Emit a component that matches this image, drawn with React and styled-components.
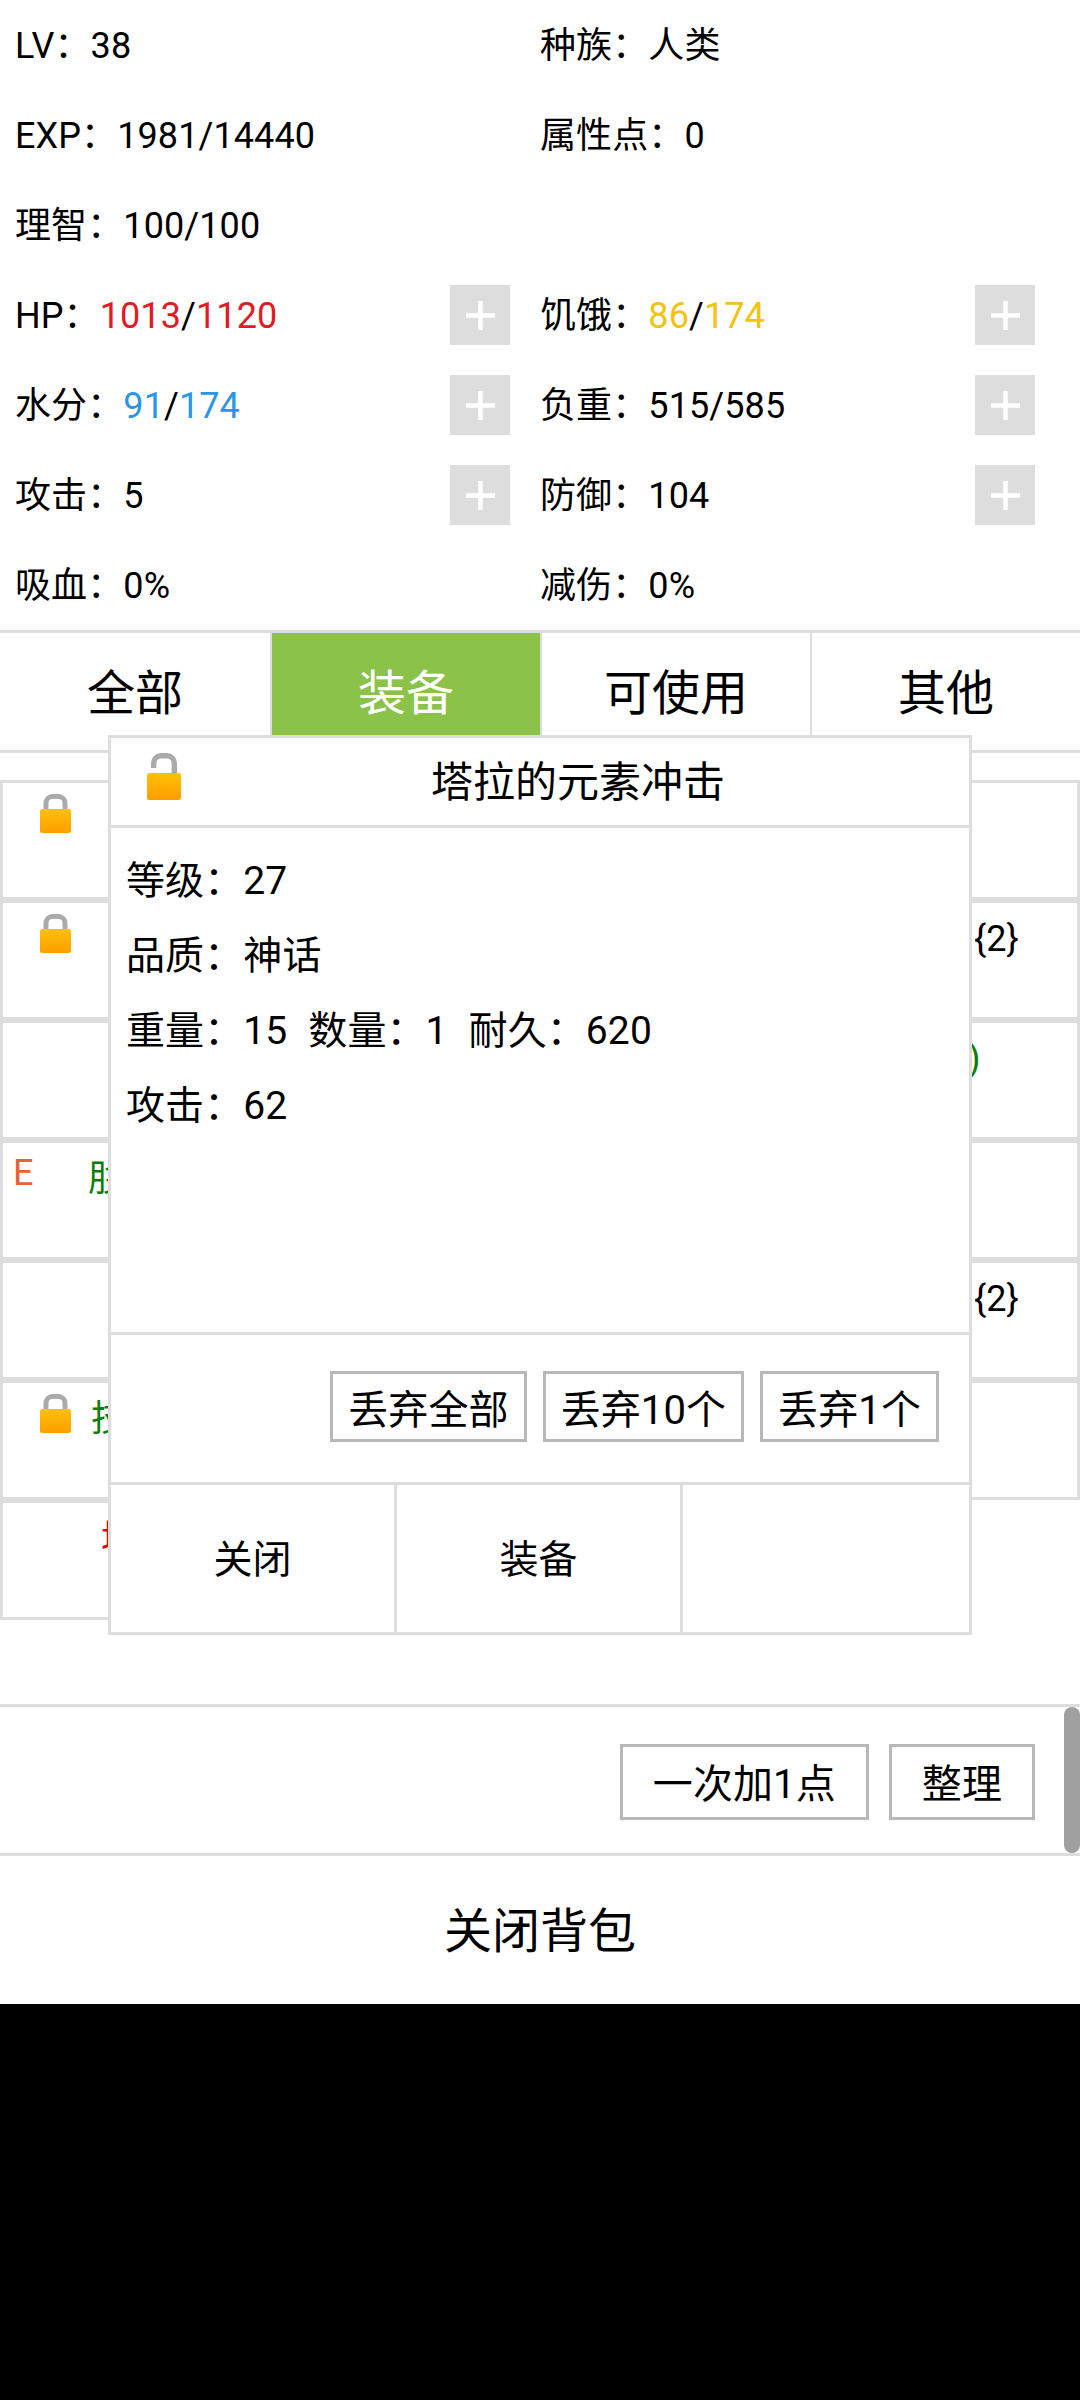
import styled, { createGlobalStyle } from "styled-components";

const line = "#dddddd";
const outline = "#b8b8b8";

const stats = [
    { label: "LV", value: "38" },
    { label: "种族", value: "人类" },
    { label: "EXP", value: "1981/14440" },
    { label: "属性点", value: "0" },
    { label: "理智", value: "100/100" },
    null,
    { label: "HP", cur: "1013", max: "1120", tone: "#e01b24", plus: true },
    { label: "饥饿", cur: "86", max: "174", tone: "#f5c211", plus: true },
    { label: "水分", cur: "91", max: "174", tone: "#2a96e8", plus: true },
    { label: "负重", value: "515/585", plus: true },
    { label: "攻击", value: "5", plus: true },
    { label: "防御", value: "104", plus: true },
    { label: "吸血", value: "0%" },
    { label: "减伤", value: "0%" },
];

const tabs = ["全部", "装备", "可使用", "其他"];

// only what shows around the popup is filled in, the rest sits behind it
const items = [
    { locked: true },
    {},
    { locked: true },
    { name: "{2}", inset: 431 },
    {},
    { name: ")", inset: 425, color: "#0a7d0a" },
    { tag: "E", name: "肜", inset: 85, color: "#0a7d0a" },
    {},
    {},
    { name: "{2}", inset: 431 },
    { locked: true, name: "技", inset: 88, color: "#0a7d0a" },
    {},
    { name: "塔", inset: 98, color: "#e00000" },
];

function ClosedLock() {
    return (
        <ItemLock width="31" height="39" viewBox="0 0 31 39">
            <defs>
                <linearGradient id="lockBody" x1="0" y1="0" x2="0" y2="1">
                    <stop offset="0" stopColor="#ffc107" />
                    <stop offset="1" stopColor="#ff9d00" />
                </linearGradient>
            </defs>
            <path d="M6 16V9A6.5 6.5 0 0 1 12.5 2.5H18.5A6.5 6.5 0 0 1 25 9V16" fill="none" stroke="#aaaaaa" strokeWidth="5" />
            <rect y="15" width="31" height="24" rx="2.5" fill="url(#lockBody)" />
        </ItemLock>
    );
}

function OpenLock() {
    return (
        <svg width="34" height="47" viewBox="0 0 34 47">
            <defs>
                <linearGradient id="openBody" x1="0" y1="0" x2="0" y2="1">
                    <stop offset="0" stopColor="#ffc107" />
                    <stop offset="1" stopColor="#ff9d00" />
                </linearGradient>
            </defs>
            <path d="M6.7 15V10A7.3 7.3 0 0 1 14 2.7H20A7.3 7.3 0 0 1 27.3 10V22" fill="none" stroke="#aaaaaa" strokeWidth="5.4" />
            <rect y="20" width="34" height="27" rx="2.5" fill="url(#openBody)" />
        </svg>
    );
}

function Stat({ stat }) {
    if (!stat) return <StatRow />;
    return (
        <StatRow>
            <StatText>
                {stat.label}：
                {stat.value ? (
                    stat.value
                ) : (
                    <>
                        <Tone $color={stat.tone}>{stat.cur}</Tone>/<Tone $color={stat.tone}>{stat.max}</Tone>
                    </>
                )}
            </StatText>
            {stat.plus && (
                <PlusButton>
                    <svg width="29" height="29" viewBox="0 0 29 29">
                        <path d="M14.5 0V29M0 14.5H29" stroke="#ffffff" strokeWidth="4.5" />
                    </svg>
                </PlusButton>
            )}
        </StatRow>
    );
}

export default function App() {
    return (
        <Page>
            <GlobalStyle />
            <StatsGrid>
                {stats.map((stat, i) => (
                    <Stat key={i} stat={stat} />
                ))}
            </StatsGrid>

            <TabBar>
                {tabs.map((tab) => (
                    <Tab key={tab} $active={tab === "装备"}>
                        {tab}
                    </Tab>
                ))}
            </TabBar>

            <ItemList>
                {items.map((item, i) => (
                    <ItemCell key={i}>
                        {item.locked && <ClosedLock />}
                        {item.tag && <ItemTag>{item.tag}</ItemTag>}
                        {item.name && (
                            <ItemName $inset={item.inset} $color={item.color}>
                                {item.name}
                            </ItemName>
                        )}
                    </ItemCell>
                ))}
            </ItemList>

            <ToolBar>
                <OutlineButton>一次加1点</OutlineButton>
                <OutlineButton>整理</OutlineButton>
                <ScrollThumb />
            </ToolBar>

            <CloseBag>关闭背包</CloseBag>

            <Popup>
                <PopupHeader>
                    <OpenLock />
                    <PopupTitle>塔拉的元素冲击</PopupTitle>
                </PopupHeader>
                <PopupBody>
                    <div>等级：27</div>
                    <div>品质：神话</div>
                    <div>重量：15&nbsp;&nbsp;数量：1&nbsp;&nbsp;耐久：620</div>
                    <div>攻击：62</div>
                </PopupBody>
                <PopupActions>
                    <DropButton>丢弃全部</DropButton>
                    <DropButton>丢弃10个</DropButton>
                    <DropButton>丢弃1个</DropButton>
                </PopupActions>
                <PopupFooter>
                    <FooterCell>关闭</FooterCell>
                    <FooterCell>装备</FooterCell>
                    <FooterCell />
                </PopupFooter>
            </Popup>
        </Page>
    );
}

const GlobalStyle = createGlobalStyle`
    * {
        box-sizing: border-box;
    }

    body {
        margin: 0;
        background: #000000;
        font-family: Roboto, "Noto Sans CJK SC", sans-serif;
        color: #000000;
    }
`;

const Page = styled.div`
    position: relative;
    width: 1080px;
    height: 2004px;
    background: #ffffff;
    display: flex;
    flex-direction: column;
`;

const StatsGrid = styled.div`
    display: grid;
    grid-template-columns: 495px 495px;
    grid-auto-rows: 90px;
    column-gap: 30px;
    padding-left: 15px;
    height: 630px;
    font-size: 36px;
`;

const StatRow = styled.div`
    display: flex;
    align-items: center;
    justify-content: space-between;
`;

const StatText = styled.span`
    padding-bottom: 6px;
    letter-spacing: 0.1px;
`;

const Tone = styled.span`
    color: ${(props) => props.$color};
`;

const PlusButton = styled.div`
    width: 60px;
    height: 60px;
    background: ${line};
    display: flex;
    align-items: center;
    justify-content: center;
`;

const TabBar = styled.div`
    display: flex;
    height: 123px;
    border-top: 3px solid ${line};
    border-bottom: 3px solid ${line};
`;

const Tab = styled.div`
    width: 270px;
    display: flex;
    align-items: center;
    justify-content: center;
    padding-bottom: 6px;
    font-size: 48px;
    color: ${(props) => (props.$active ? "#ffffff" : "#000000")};
    background: ${(props) => (props.$active ? "#8bc34a" : "#ffffff")};
    background-clip: padding-box;

    & + & {
        border-left: 2px solid ${line};
    }
`;

const ItemList = styled.div`
    flex: 1;
    display: grid;
    grid-template-columns: 540px 540px;
    grid-auto-rows: 120px;
    padding-top: 27px;
`;

const ItemCell = styled.div`
    position: relative;
    border: 3px solid ${line};
`;

const ItemLock = styled.svg`
    position: absolute;
    top: 11px;
    left: 37px;
`;

const ItemTag = styled.span`
    position: absolute;
    top: 7px;
    left: 10px;
    font-size: 36px;
    line-height: 46px;
    color: #e8603c;
`;

const ItemName = styled.div`
    padding-left: ${(props) => props.$inset}px;
    font-size: 36px;
    line-height: 72px;
    color: ${(props) => props.$color || "#000000"};
`;

const ToolBar = styled.div`
    position: relative;
    display: flex;
    align-items: center;
    justify-content: flex-end;
    gap: 20px;
    height: 152px;
    padding: 4px 45px 0 0;
    border-top: 3px solid ${line};
    border-bottom: 3px solid ${line};
`;

const OutlineButton = styled.div`
    height: 76px;
    padding: 0 30px 2px;
    display: flex;
    align-items: center;
    font-size: 40px;
    letter-spacing: 0.1px;
    border: 3px solid ${outline};
`;

const ScrollThumb = styled.div`
    position: absolute;
    top: 0;
    right: 0;
    bottom: 0;
    width: 16px;
    border-radius: 8px;
    background: #a0a0a0;
`;

const CloseBag = styled.div`
    height: 148px;
    display: flex;
    align-items: center;
    justify-content: center;
    padding-bottom: 6px;
    font-size: 48px;
`;

const Popup = styled.div`
    position: absolute;
    top: 735px;
    left: 108px;
    width: 864px;
    height: 900px;
    display: flex;
    flex-direction: column;
    background: #ffffff;
    border: 3px solid ${line};
`;

const PopupHeader = styled.div`
    height: 90px;
    flex-shrink: 0;
    display: flex;
    align-items: flex-start;
    padding: 15px 0 0 36px;
    border-bottom: 3px solid ${line};
`;

const PopupTitle = styled.div`
    flex: 1;
    padding-left: 6px;
    text-align: center;
    font-size: 42px;
    line-height: 60px;
`;

const PopupBody = styled.div`
    height: 507px;
    flex-shrink: 0;
    padding: 16px 15px 0;
    font-size: 39px;
    line-height: 75px;
    letter-spacing: 0.1px;
    word-spacing: 0.7px;
    border-bottom: 3px solid ${line};
`;

const PopupActions = styled.div`
    height: 150px;
    flex-shrink: 0;
    display: flex;
    align-items: center;
    justify-content: flex-end;
    gap: 16px;
    padding: 0 30px 4px 0;
    border-bottom: 3px solid ${line};
`;

const DropButton = styled.div`
    height: 71px;
    padding: 0 15px;
    display: flex;
    align-items: center;
    font-size: 40px;
    letter-spacing: 0.1px;
    border: 3px solid ${outline};
`;

const PopupFooter = styled.div`
    flex: 1;
    display: grid;
    grid-template-columns: 283px 286px 1fr;
`;

const FooterCell = styled.div`
    display: flex;
    align-items: center;
    justify-content: center;
    padding-bottom: 5px;
    font-size: 39px;

    & + & {
        border-left: 3px solid ${line};
    }
`;
